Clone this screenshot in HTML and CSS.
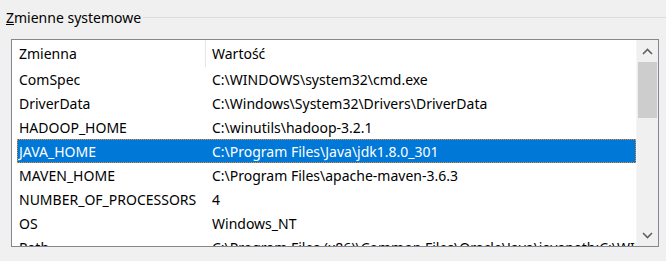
FILE: index.html
```html
<!DOCTYPE html>
<html lang="pl">
<head>
  <meta charset="UTF-8">
  <title>Zmienne systemowe</title>
  <link rel="stylesheet" href="styles.css">
</head>
<body>
  <div class="group">
    <div class="legend"><span class="legend-text"><u>Z</u>mienne systemowe</span><span class="legend-line"></span></div>
    <div class="list">
      <div class="rows">
        <div class="head">
          <div class="hcol1">Zmienna</div>
          <div class="hcol2">Wartość</div>
        </div>
        <div class="row"><div class="c1">ComSpec</div><div class="c2">C:\WINDOWS\system32\cmd.exe</div></div>
        <div class="row"><div class="c1">DriverData</div><div class="c2">C:\Windows\System32\Drivers\DriverData</div></div>
        <div class="row"><div class="c1">HADOOP_HOME</div><div class="c2">C:\winutils\hadoop-3.2.1</div></div>
        <div class="row selected"><div class="c1">JAVA_HOME</div><div class="c2">C:\Program Files\Java\jdk1.8.0_301</div></div>
        <div class="row"><div class="c1">MAVEN_HOME</div><div class="c2">C:\Program Files\apache-maven-3.6.3</div></div>
        <div class="row"><div class="c1">NUMBER_OF_PROCESSORS</div><div class="c2">4</div></div>
        <div class="row"><div class="c1">OS</div><div class="c2">Windows_NT</div></div>
        <div class="row"><div class="c1">Path</div><div class="c2">C:\Program Files (x86)\Common Files\Oracle\Java\javapath;C:\WINDOWS</div></div>
      </div>
      <div class="scrollbar">
        <div class="sb-btn">
          <svg width="11" height="7" viewBox="0 0 11 7"><path d="M1 6 L5.5 1.5 L10 6" fill="none" stroke="#606060" stroke-width="1.6"/></svg>
        </div>
        <div class="sb-thumb"></div>
        <div class="sb-track"></div>
        <div class="sb-btn">
          <svg width="11" height="7" viewBox="0 0 11 7"><path d="M1 1 L5.5 5.5 L10 1" fill="none" stroke="#606060" stroke-width="1.6"/></svg>
        </div>
      </div>
    </div>
  </div>
</body>
</html>
```

FILE: styles.css
```css
body { margin: 0; background: #f0f0f0; font-family: 'Noto Sans', 'Segoe UI', sans-serif; font-size: 14px; color: #000; }
.group { padding-top: 7px; }
.legend { display: flex; align-items: center; height: 20px; }
.legend-text { padding-left: 6px; padding-right: 2px; white-space: nowrap; }
.legend-line { flex: 1; border-top: 1px solid #dcdcdc; }
.list {
  margin: 12px 0 0 11px;
  width: 646px;
  height: 206px;
  border: 1px solid #828790;
  background: #fff;
  display: flex;
  overflow: hidden;
}
.rows { flex: 1; overflow: hidden; }
.head { display: flex; height: 27px; align-items: center; }
.hcol1 { width: 186px; flex-shrink: 0; padding-left: 7px; height: 100%; display: flex; align-items: center; border-right: 1px solid #e5e5e5; }
.hcol2 { padding-left: 6px; }
.row { display: flex; height: 24px; align-items: center; margin-left: 5px; white-space: nowrap; box-sizing: border-box; overflow: hidden; }
.c1 { width: 186px; flex-shrink: 0; padding-left: 2px; }
.c2 { padding-left: 7px; }
.selected { background: #0078d7; color: #fff; border: 1px dotted #f38b2c; }
.selected .c1 { padding-left: 1px; }
.scrollbar { width: 21px; flex-shrink: 0; background: #f0f0f0; display: flex; flex-direction: column; border-left: 1px solid #f5f5f5; }
.sb-btn { height: 22px; display: flex; align-items: center; justify-content: center; }
.sb-thumb { height: 56px; background: #cdcdcd; margin: 0 1px; }
.sb-track { flex: 1; }
```
